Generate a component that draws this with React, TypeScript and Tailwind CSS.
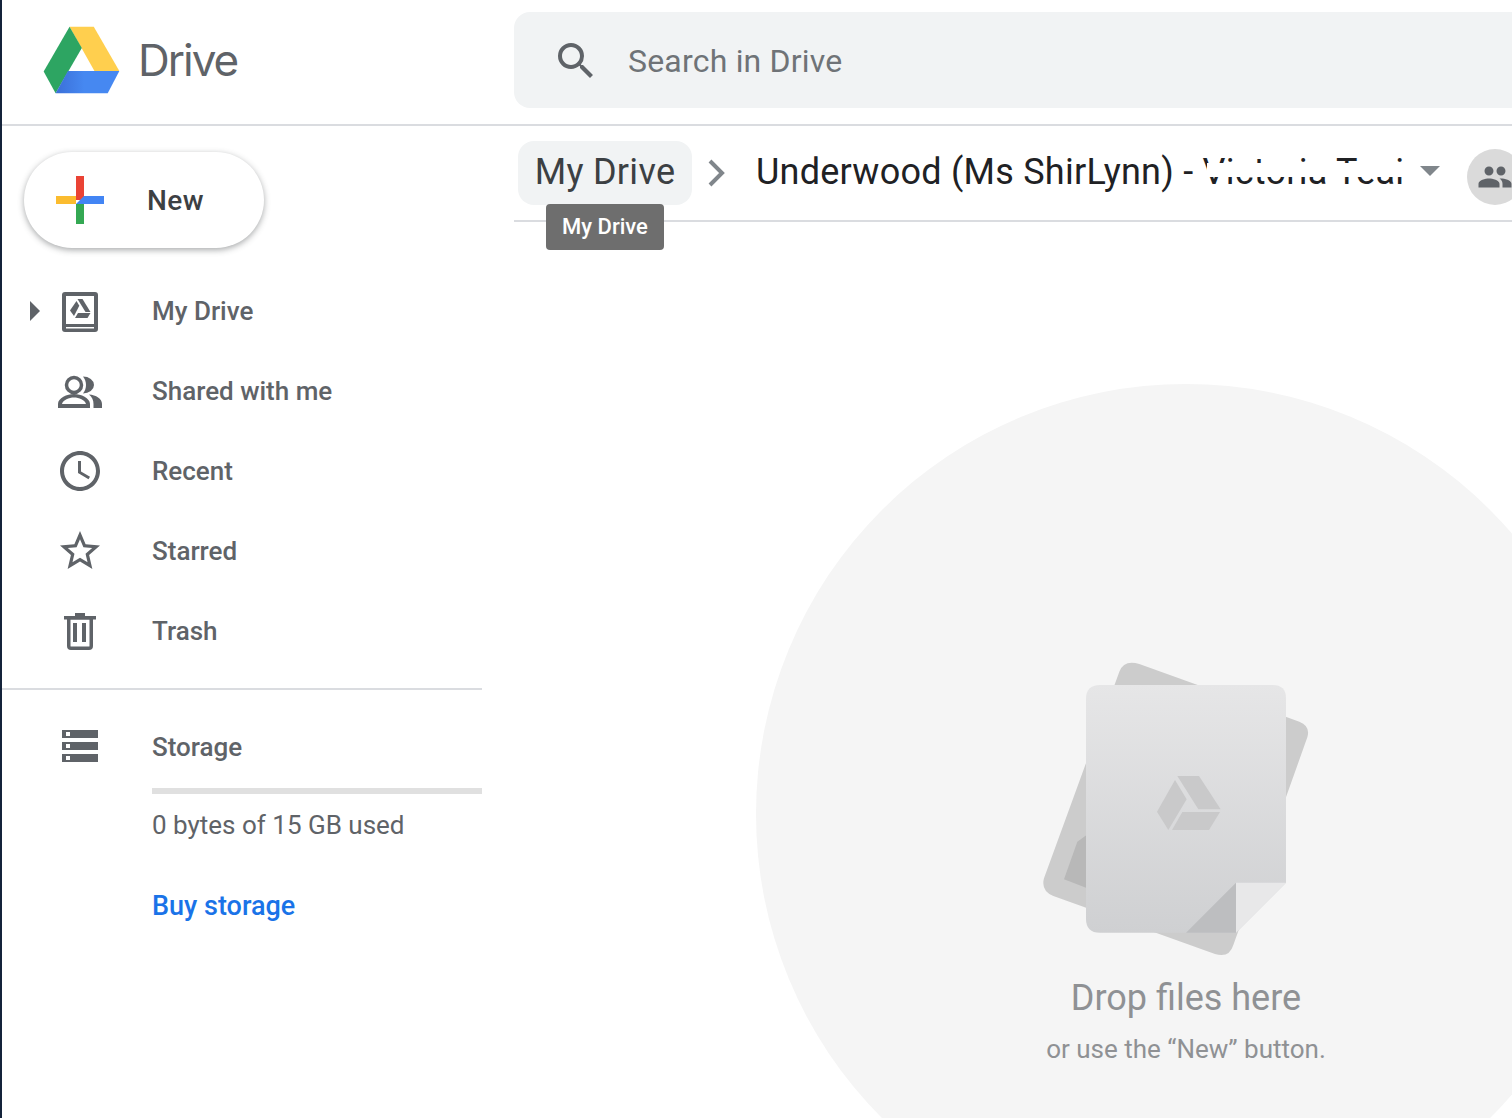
import type { ReactNode } from 'react';

function DriveLogo() {
  return (
    <svg width="77" height="68" viewBox="130 78 232 204" className="shrink-0">
      <defs>
        <linearGradient id="blueShade" x1="0" x2="1" y1="0" y2="0">
          <stop offset="0" stopColor="#3b6fd8" />
          <stop offset="0.45" stopColor="#4688f1" />
        </linearGradient>
      </defs>
      <polygon points="210,80 283,80 360,213 285,213" fill="#ffcf4e" />
      <polygon points="210,80 247,144 168,280 132,215" fill="#2da562" />
      <polygon points="205,213 360,213 325,280 168,280" fill="url(#blueShade)" />
    </svg>
  );
}

function PlusIcon() {
  return (
    <svg width="48" height="48" viewBox="0 0 48 48" className="shrink-0">
      <rect x="20" y="0" width="8" height="24" fill="#ea4335" />
      <rect x="28" y="20" width="20" height="8" fill="#4285f4" />
      <polygon points="20,28 28,20 28,28" fill="#4285f4" />
      <rect x="0" y="20" width="20" height="8" fill="#fbbc2f" />
      <rect x="20" y="28" width="8" height="20" fill="#34a853" />
    </svg>
  );
}

function MyDriveIcon() {
  return (
    <svg width="48" height="48" viewBox="0 0 48 48" fill="#5f6368">
      <path
        fillRule="evenodd"
        d="M9 5h30a3 3 0 0 1 3 3v34a3 3 0 0 1-3 3H9a3 3 0 0 1-3-3V8a3 3 0 0 1 3-3zM10 9v28h28V9zM10 40v1.500h28V40z"
      />
      <polygon points="21.500,12 26.500,12 34.500,25 29.500,25" />
      <polygon points="20.500,14 23.300,18.800 18,29 14,23.500" />
      <polygon points="22,26 34.500,26 31.500,31 19,31" />
    </svg>
  );
}

function SharedIcon() {
  return (
    <svg width="48" height="48" viewBox="0 0 48 48" fill="#5f6368">
      <circle cx="18" cy="18" r="7.500" fill="none" stroke="#5f6368" strokeWidth="3.500" />
      <path
        fillRule="evenodd"
        d="M2 41v-4c0-6 9-10 16-10s16 4 16 10v4zM6 37c1-4 7-6.500 12-6.500s11 2.500 12 6.500z"
      />
      <path d="M27 9.500a11 8.500 0 0 1 0 17c2-2.500 3-5.500 3-8.500s-1-6-3-8.500z" />
      <path d="M33 27.500c7 .5 13 4 13 9.500v4h-8.500v-4c0-4-1.500-7-4.500-9.500z" />
    </svg>
  );
}

function ClockIcon() {
  return (
    <svg width="48" height="48" viewBox="0 0 24 24" fill="#5f6368">
      <path d="M11.990 2C6.470 2 2 6.480 2 12s4.470 10 9.990 10C17.520 22 22 17.520 22 12S17.520 2 11.990 2zM12 20c-4.420 0-8-3.580-8-8s3.580-8 8-8 8 3.580 8 8-3.580 8-8 8zm.5-13H11v6l5.250 3.150.75-1.230-4.500-2.670z" />
    </svg>
  );
}

function StarIcon() {
  return (
    <svg width="48" height="48" viewBox="0 0 24 24" fill="#5f6368">
      <path d="M22 9.240l-7.190-.62L12 2 9.190 8.630 2 9.240l5.460 4.730L5.820 21 12 17.270 18.180 21l-1.630-7.030L22 9.240zM12 15.400l-3.760 2.270 1-4.280-3.320-2.880 4.380-.38L12 6.100l1.710 4.040 4.380.38-3.320 2.880 1 4.280L12 15.400z" />
    </svg>
  );
}

function TrashIcon() {
  return (
    <svg width="48" height="48" viewBox="0 0 48 48" fill="#5f6368">
      <path d="M19 6h10v3h11v3.500H8V9h11z" />
      <path
        fillRule="evenodd"
        d="M11 12h26v27a4 4 0 0 1-4 4H15a4 4 0 0 1-4-4zM14.500 12.500v26.500a.5.5 0 0 0 .5.5h18a.5.5 0 0 0 .5-.5V12.500z"
      />
      <rect x="17" y="16" width="4" height="19" />
      <rect x="26" y="16" width="4" height="19" />
    </svg>
  );
}

function StorageIcon() {
  return (
    <svg width="48" height="48" viewBox="0 0 48 48">
      <rect x="6" y="7" width="36" height="8" fill="#5f6368" />
      <rect x="6" y="19" width="36" height="8" fill="#5f6368" />
      <rect x="6" y="31" width="36" height="8" fill="#5f6368" />
      <rect x="10" y="9" width="4" height="4" fill="#fff" />
      <rect x="10" y="21" width="4" height="4" fill="#fff" />
      <rect x="10" y="33" width="4" height="4" fill="#fff" />
    </svg>
  );
}

function DropIllustration() {
  return (
    <svg width="292" height="300" viewBox="0 0 292 300" className="shrink-0">
      <defs>
        <linearGradient id="pageFill" x1="0" x2="0" y1="0" y2="1">
          <stop offset="0" stopColor="#e6e6e7" />
          <stop offset="1" stopColor="#cfd0d2" />
        </linearGradient>
      </defs>
      {/* coordinates are in a 3x space, same as the crop I measured from */}
      <g transform="translate(-20 -20) scale(0.33333)">
        <path
          d="M358 72 L838 245 Q872 258 862 292 L640 915 Q628 955 585 942 L100 768 Q62 752 72 715 L298 95 Q312 58 358 72 Z"
          fill="#cccccc"
        />
        <polygon points="172,605 132,718 200,744 200,585" fill="#b8b8b8" />
        <path
          d="M240 135 H758 Q798 135 798 175 V728 L648 878 H240 Q198 878 198 836 V177 Q198 135 240 135 Z"
          fill="url(#pageFill)"
        />
        <polygon points="648,728 798,728 648,878" fill="#e8e8e9" />
        <polygon points="648,728 498,878 648,878" fill="#bdbec0" />
        <polygon points="472,408 537,408 602,508 535,508" fill="#c9c9ca" />
        <polygon points="465,420 500,478 445,570 411,515" fill="#c9c9ca" />
        <polygon points="487,516 600,516 567,570 456,570" fill="#c9c9ca" />
      </g>
    </svg>
  );
}

function NavRow({ icon, label, arrow }: { icon: ReactNode; label: string; arrow?: boolean }) {
  return (
    <div className="h-20 flex items-center">
      <div className="w-[54px] pl-[28px] shrink-0">
        {arrow && <div className="w-0 h-0 border-y-[10px] border-y-transparent border-l-[10px] border-l-[#5f6368]" />}
      </div>
      <div className="w-[96px] shrink-0">{icon}</div>
      <span className="text-[26px] font-medium text-[#5f6368]">{label}</span>
    </div>
  );
}

export default function App() {
  return (
    <div className="w-[1512px] h-[1118px] overflow-hidden bg-white flex font-['Roboto',sans-serif]">
      <div className="w-[2px] shrink-0 bg-[#14233a]" />
      <div className="flex-1 min-w-0 flex flex-col">
        <header className="h-[126px] shrink-0 flex border-b-2 border-[#dadce0]">
          <div className="w-[512px] shrink-0 flex items-center pl-[41px] pb-[4px] gap-[18px]">
            <DriveLogo />
            <span className="text-[44px] text-[#5f6368] font-['Inter',sans-serif] tracking-[-2px]">Drive</span>
          </div>
          <div className="flex-1 h-[96px] mt-3 rounded-l-2xl bg-[#f1f3f4] flex items-center pl-[38px] pt-[2px]">
            <svg width="48" height="48" viewBox="0 0 24 24" fill="#5f6368" className="shrink-0">
              <path d="M15.500 14h-.79l-.28-.27A6.470 6.470 0 0 0 16 9.500 6.500 6.500 0 1 0 9.500 16c1.610 0 3.090-.59 4.230-1.570l.27.28v.79l5 4.990L20.490 19l-4.990-5zm-6 0C7.010 14 5 11.990 5 9.500S7.010 5 9.500 5 14 7.010 14 9.500 11.990 14 9.500 14z" />
            </svg>
            <span className="ml-[28px] text-[32px] tracking-[0.2px] text-[#6f7377]">Search in Drive</span>
          </div>
        </header>

        <div className="flex-1 min-h-0 flex">
          <aside className="w-[480px] shrink-0">
            <div className="pt-[26px] pl-[22px]">
              <div className="w-[240px] h-[96px] rounded-[48px] bg-white shadow-[0_2px_6px_rgba(60,64,67,0.45)] flex items-center pl-[32px]">
                <PlusIcon />
                <span className="ml-[43px] pt-[2px] text-[28px] tracking-[0.4px] font-medium text-[#3c4043]">New</span>
              </div>
            </div>
            <nav className="mt-[23px] pb-[17px] border-b-2 border-[#dadce0]">
              <NavRow icon={<MyDriveIcon />} label="My Drive" arrow />
              <NavRow icon={<SharedIcon />} label="Shared with me" />
              <NavRow icon={<ClockIcon />} label="Recent" />
              <NavRow icon={<StarIcon />} label="Starred" />
              <NavRow icon={<TrashIcon />} label="Trash" />
            </nav>
            <div className="pt-[33px] pl-[54px]">
              <div className="flex items-center h-[48px]">
                <div className="w-[96px] shrink-0"><StorageIcon /></div>
                <span className="text-[26px] font-medium text-[#5f6368]">Storage</span>
              </div>
              <div className="ml-[96px] mt-[17px] h-[6px] bg-[#e0e0e0]" />
              <div className="ml-[96px] mt-[14px] text-[26px] leading-[34px] text-[#5f6368]">0 bytes of 15 GB used</div>
              <div className="ml-[96px] mt-[47px] text-[27px] leading-[34px] font-medium text-[#1a73e8]">Buy storage</div>
            </div>
          </aside>

          <main className="flex-1 min-w-0 ml-8 flex flex-col">
            <div className="h-[96px] shrink-0 border-b-2 border-[#dadce0] flex items-start pt-[15px] pl-1 relative">
              <div className="h-16 w-[174px] shrink-0 rounded-2xl bg-[#f1f3f4] flex items-center justify-center pb-[2px] text-[36px] tracking-[0.3px] text-[#3c4043]">
                My Drive
              </div>
              <svg width="48" height="48" viewBox="0 0 48 48" className="shrink-0 mt-2" fill="none" stroke="#80868b" strokeWidth="4">
                <path d="M18 12l12 12-12 12" />
              </svg>
              <div className="ml-4 h-16 w-[644px] shrink-0 flex items-center pb-[2px] text-[36px] tracking-[0.25px] text-[#202124] whitespace-nowrap relative">
                Underwood (Ms ShirLynn) - Victoria Teai
                <div className="absolute left-[451px] top-[22px] w-[200px] h-[14px] bg-white" />
              </div>
              <div className="ml-5 mt-[25px] w-0 h-0 border-x-[10px] border-x-transparent border-t-[10px] border-t-[#80868b] shrink-0" />
              <div className="ml-[27px] mt-2 w-14 h-14 rounded-full bg-[#dadada] shrink-0 flex items-center pl-[10px]">
                <svg width="36" height="36" viewBox="0 0 24 24" fill="#5f6368" className="shrink-0">
                  <path d="M16 11c1.660 0 2.990-1.340 2.990-3S17.660 5 16 5c-1.660 0-3 1.340-3 3s1.340 3 3 3zm-8 0c1.660 0 2.990-1.340 2.990-3S9.660 5 8 5C6.340 5 5 6.340 5 8s1.340 3 3 3zm0 2c-2.330 0-7 1.170-7 3.500V19h14v-2.500c0-2.330-4.670-3.500-7-3.500zm8 0c-.29 0-.62.020-.97.050 1.160.84 1.970 1.970 1.970 3.450V19h6v-2.500c0-2.330-4.670-3.500-7-3.500z" />
                </svg>
              </div>
              <div className="absolute left-8 top-[78px] w-[118px] h-[46px] rounded bg-[#6e6e6e] text-white text-[22px] font-medium flex items-center justify-center pb-[2px]">
                My Drive
              </div>
            </div>
            <div className="ml-[242px] mt-[162px] w-[860px] h-[860px] shrink-0 rounded-full bg-[#f5f5f5] flex flex-col items-center pt-[276px]">
              <DropIllustration />
              <div className="mt-[16px] text-[36px] leading-[44px] text-[#8f9194]">Drop files here</div>
              <div className="mt-[12px] text-[26px] leading-[34px] text-[#8f9194]">or use the “New” button.</div>
            </div>
          </main>
        </div>
      </div>
    </div>
  );
}
